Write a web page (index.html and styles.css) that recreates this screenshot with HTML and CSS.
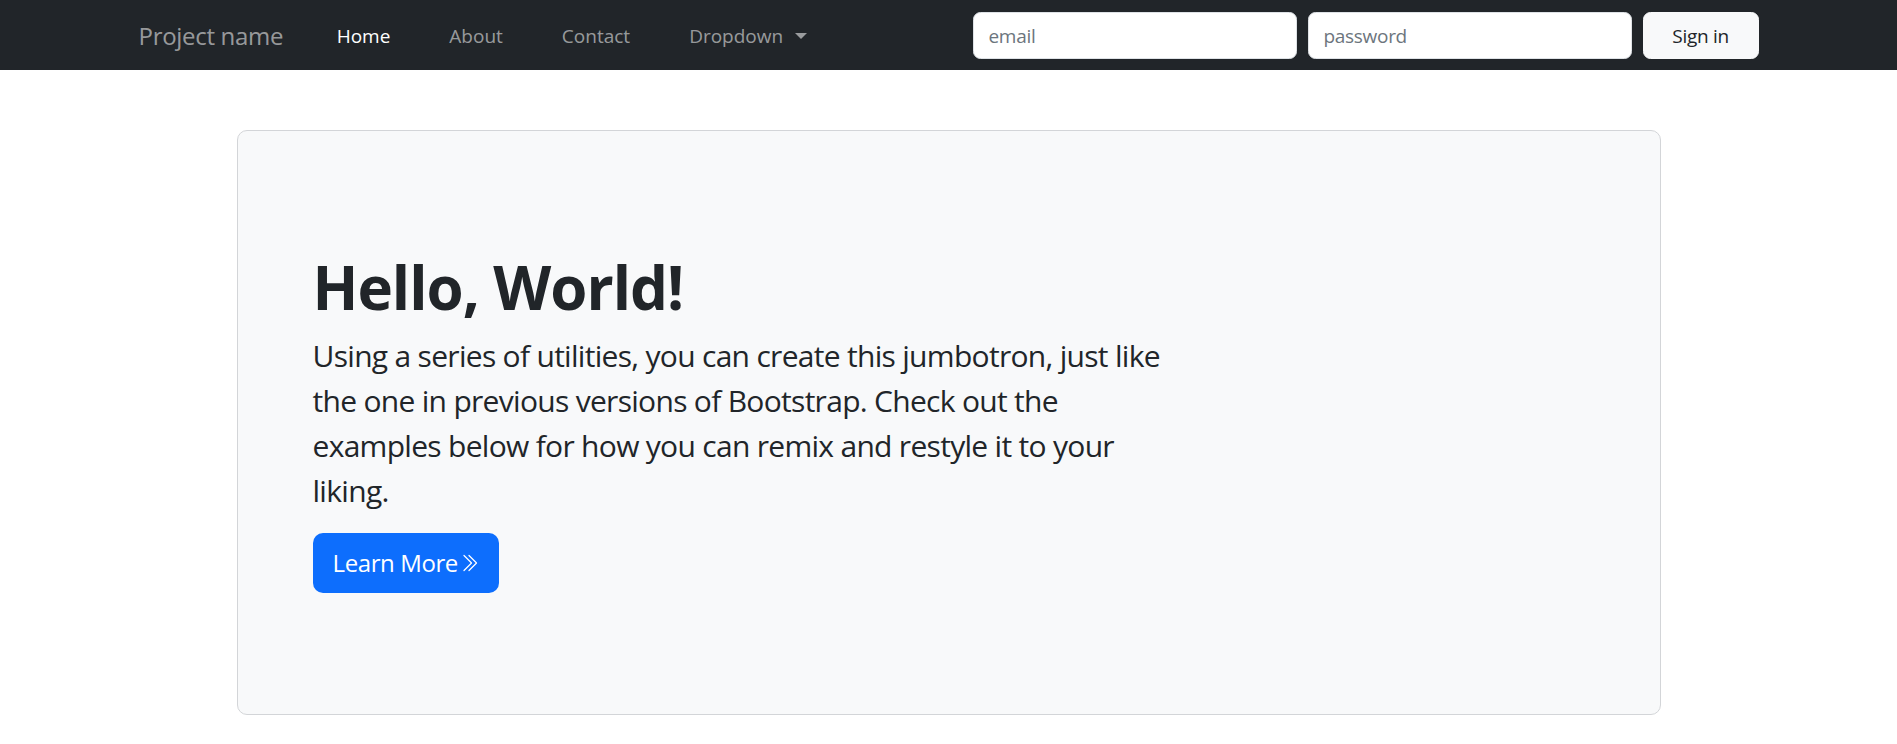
FILE: index.html
```html
<!DOCTYPE html>
<html lang="en">
<head>
<meta charset="utf-8">
<title>Project name</title>
<link rel="stylesheet" href="styles.css">
</head>
<body>
<nav class="navbar">
  <div class="nav-inner">
    <a class="brand" href="#">Project name</a>
    <ul class="nav-links">
      <li><a class="nav-link active" href="#">Home</a></li>
      <li><a class="nav-link" href="#">About</a></li>
      <li><a class="nav-link" href="#">Contact</a></li>
      <li><a class="nav-link dropdown-toggle" href="#">Dropdown<span class="caret"></span></a></li>
    </ul>
    <form class="signin">
      <input class="field" type="text" placeholder="email">
      <input class="field" type="password" placeholder="password">
      <button class="btn-light" type="button">Sign in</button>
    </form>
  </div>
</nav>
<main class="jumbotron">
  <div class="jumbo-inner">
    <h1 class="title">Hello, World!</h1>
    <p class="lead">Using a series of utilities, you can create this jumbotron, just like the one in previous versions of Bootstrap. Check out the examples below for how you can remix and restyle it to your liking.</p>
    <a class="btn-primary" href="#">Learn More<svg class="chev" viewBox="0 0 16 16" width="20" height="20" fill="currentColor" aria-hidden="true"><path fill-rule="evenodd" d="M3.646 1.646a.5.5 0 0 1 .708 0l6 6a.5.5 0 0 1 0 .708l-6 6a.5.5 0 0 1-.708-.708L9.293 8 3.646 2.354a.5.5 0 0 1 0-.708z"/><path fill-rule="evenodd" d="M7.646 1.646a.5.5 0 0 1 .708 0l6 6a.5.5 0 0 1 0 .708l-6 6a.5.5 0 0 1-.708-.708L13.293 8 7.646 2.354a.5.5 0 0 1 0-.708z"/></svg></a>
  </div>
</main>
</body>
</html>
```
FILE: styles.css
```css
* { box-sizing: border-box; }
html, body { margin: 0; padding: 0; }
body {
  font-family: "Open Sans", "Noto Sans", sans-serif;
  font-size: 20px;
  line-height: 1.5;
  color: #212529;
  background: #fff;
}
a { text-decoration: none; }

.navbar {
  background: #212529;
  height: 70px;
  display: flex;
  align-items: center;
}
.nav-inner {
  width: 1620px;
  margin: 0 auto;
  display: flex;
  align-items: center;
}
.brand {
  font-size: 24px;
  color: rgba(255,255,255,0.55);
  letter-spacing: -0.3px;
  margin-right: 24px;
  line-height: 36px;
  padding-top: 2px;
}
.nav-links {
  list-style: none;
  margin: 0;
  padding: 2px 0 0;
  display: flex;
  align-items: center;
}
.nav-link {
  display: block;
  padding: 8px 29.5px;
  font-size: 19px;
  letter-spacing: 0;
  color: rgba(255,255,255,0.55);
}
.nav-link.active { color: #fff; }
.caret {
  display: inline-block;
  margin-left: 12px;
  vertical-align: 4px;
  border-top: 6px solid rgba(255,255,255,0.55);
  border-left: 6px solid transparent;
  border-right: 6px solid transparent;
}
.signin {
  margin-left: auto;
  display: flex;
  gap: 11px;
  align-items: center;
}
.field {
  width: 324px;
  height: 47px;
  padding: 8px 15px 6px;
  font-family: inherit;
  font-size: 19px;
  color: #212529;
  background: #fff;
  border: 1px solid #dee2e6;
  border-radius: 7.5px;
  outline: none;
}
.field::placeholder { color: #6c757d; letter-spacing: -0.3px; }
.btn-light {
  width: 116px;
  height: 47px;
  font-family: inherit;
  font-size: 19px;
  letter-spacing: -0.3px;
  color: #212529;
  background: #f8f9fa;
  border: 1px solid #f8f9fa;
  border-radius: 7.5px;
  padding: 2px 0 0;
}

.jumbotron {
  width: 1424px;
  margin: 60px auto 0;
  background: #f8f9fa;
  border: 1px solid #d3d5d8;
  border-radius: 10px;
  padding: 60px;
}
.jumbo-inner {
  padding: 60px 15px 61px;
}
.title {
  margin: 0 0 10px;
  font-size: 60px;
  font-weight: 700;
  line-height: 1.2;
  letter-spacing: -1px;
}
.lead {
  width: 848px;
  margin: 0 0 20px;
  font-size: 30px;
  line-height: 45px;
  letter-spacing: -0.7px;
}
.btn-primary {
  display: inline-flex;
  align-items: center;
  height: 60px;
  padding: 0 20px;
  font-size: 24px;
  letter-spacing: -0.4px;
  color: #fff;
  background: #0d6efd;
  border-radius: 10px;
}
.chev { margin-left: 1px; }
```
